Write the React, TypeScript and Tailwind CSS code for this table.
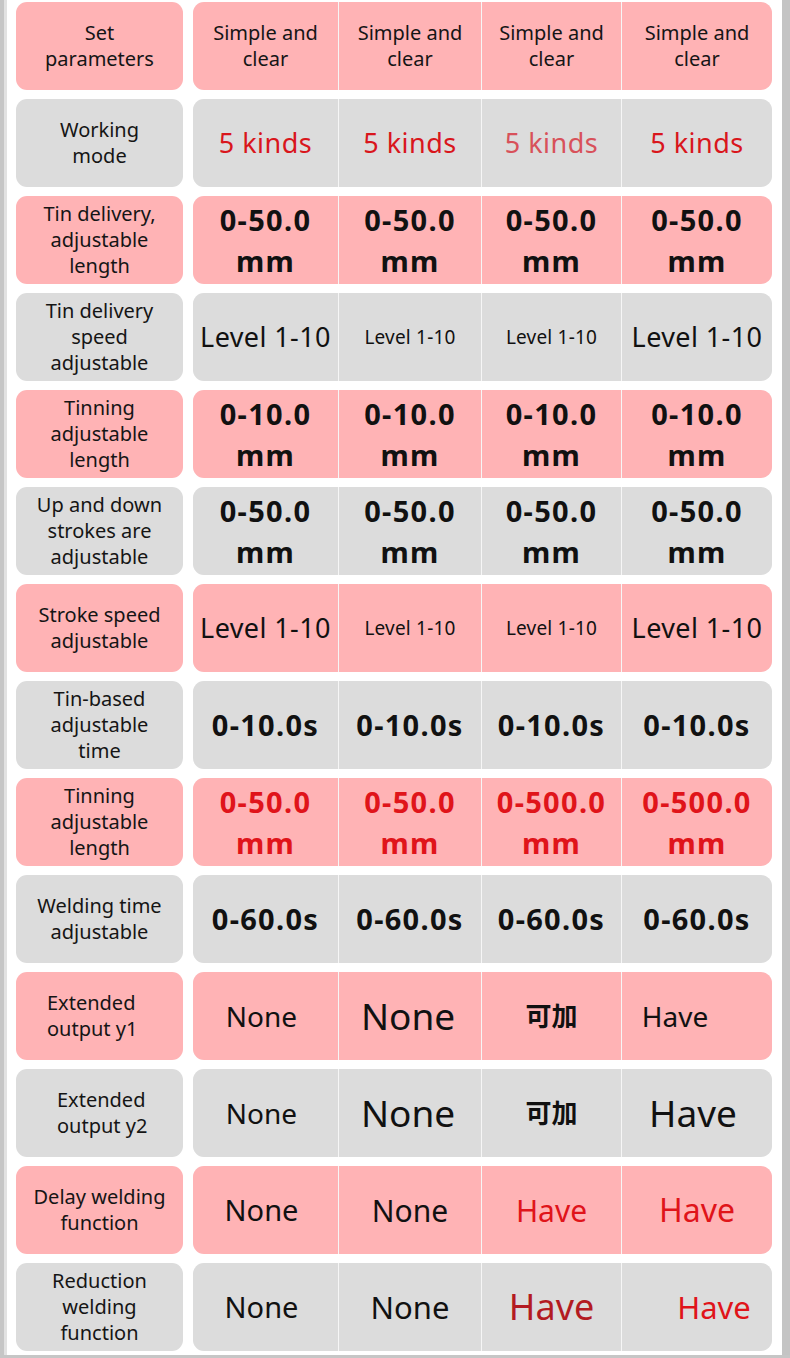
import React from "react";

type Cell = { t: string[]; c: string; wrap?: string };

const PINK = "bg-[#ffb3b5]";
const GRAY = "bg-[#dcdcdc]";

const H = "text-[20px] leading-[26px] text-[#151515]";
const KINDS = "text-[27px] tracking-[0.5px] text-[#d9161c]";
const KINDS2 = "text-[27px] tracking-[0.5px] text-[#d8515a]";
const MM = "text-[29px] font-bold leading-[41px] tracking-[1.3px] text-[#111]";
const MMR = "text-[29px] font-bold leading-[41px] tracking-[1.3px] text-[#e0141a]";
const LVL_B = "text-[27px] tracking-[0.4px] text-[#111]";
const LVL_S = "text-[19px] tracking-[0.2px] text-[#111]";
const SEC = "text-[29px] font-bold tracking-[1.3px] text-[#111]";

const rows: { pink: boolean; label: string[]; labelCls?: string; cells: Cell[] }[] = [
  {
    pink: true,
    label: ["Set", "parameters"],
    cells: [
      { t: ["Simple and", "clear"], c: H },
      { t: ["Simple and", "clear"], c: H },
      { t: ["Simple and", "clear"], c: H },
      { t: ["Simple and", "clear"], c: H },
    ],
  },
  {
    pink: false,
    label: ["Working", "mode"],
    cells: [
      { t: ["5 kinds"], c: KINDS },
      { t: ["5 kinds"], c: KINDS },
      { t: ["5 kinds"], c: KINDS2 },
      { t: ["5 kinds"], c: KINDS },
    ],
  },
  {
    pink: true,
    label: ["Tin delivery,", "adjustable", "length"],
    cells: [
      { t: ["0-50.0", "mm"], c: MM },
      { t: ["0-50.0", "mm"], c: MM },
      { t: ["0-50.0", "mm"], c: MM },
      { t: ["0-50.0", "mm"], c: MM },
    ],
  },
  {
    pink: false,
    label: ["Tin delivery", "speed", "adjustable"],
    cells: [
      { t: ["Level 1-10"], c: LVL_B },
      { t: ["Level 1-10"], c: LVL_S },
      { t: ["Level 1-10"], c: LVL_S },
      { t: ["Level 1-10"], c: LVL_B },
    ],
  },
  {
    pink: true,
    label: ["Tinning", "adjustable", "length"],
    cells: [
      { t: ["0-10.0", "mm"], c: MM },
      { t: ["0-10.0", "mm"], c: MM },
      { t: ["0-10.0", "mm"], c: MM },
      { t: ["0-10.0", "mm"], c: MM },
    ],
  },
  {
    pink: false,
    label: ["Up and down", "strokes are", "adjustable"],
    cells: [
      { t: ["0-50.0", "mm"], c: MM },
      { t: ["0-50.0", "mm"], c: MM },
      { t: ["0-50.0", "mm"], c: MM },
      { t: ["0-50.0", "mm"], c: MM },
    ],
  },
  {
    pink: true,
    label: ["Stroke speed", "adjustable"],
    cells: [
      { t: ["Level 1-10"], c: LVL_B },
      { t: ["Level 1-10"], c: LVL_S },
      { t: ["Level 1-10"], c: LVL_S },
      { t: ["Level 1-10"], c: LVL_B },
    ],
  },
  {
    pink: false,
    label: ["Tin-based", "adjustable", "time"],
    cells: [
      { t: ["0-10.0s"], c: SEC },
      { t: ["0-10.0s"], c: SEC },
      { t: ["0-10.0s"], c: SEC },
      { t: ["0-10.0s"], c: SEC },
    ],
  },
  {
    pink: true,
    label: ["Tinning", "adjustable", "length"],
    cells: [
      { t: ["0-50.0", "mm"], c: MMR },
      { t: ["0-50.0", "mm"], c: MMR },
      { t: ["0-500.0", "mm"], c: MMR },
      { t: ["0-500.0", "mm"], c: MMR },
    ],
  },
  {
    pink: false,
    label: ["Welding time", "adjustable"],
    cells: [
      { t: ["0-60.0s"], c: SEC },
      { t: ["0-60.0s"], c: SEC },
      { t: ["0-60.0s"], c: SEC },
      { t: ["0-60.0s"], c: SEC },
    ],
  },
  {
    pink: true,
    label: ["Extended", "output y1"],
    labelCls: "items-start pl-[31px]",
    cells: [
      { t: ["None"], c: "text-[28px] text-[#111]", wrap: "pr-[8px]" },
      { t: ["None"], c: "text-[37px] text-[#111]", wrap: "pr-[4px]" },
      { t: ["可加"], c: "text-[26px] font-bold text-[#111]" },
      { t: ["Have"], c: "text-[28px] text-[#111]", wrap: "pr-[44px]" },
    ],
  },
  {
    pink: false,
    label: ["Extended", "output y2"],
    labelCls: "items-start pl-[41px]",
    cells: [
      { t: ["None"], c: "text-[28px] text-[#111]", wrap: "pr-[8px]" },
      { t: ["None"], c: "text-[37px] text-[#111]", wrap: "pr-[4px]" },
      { t: ["可加"], c: "text-[26px] font-bold text-[#111]" },
      { t: ["Have"], c: "text-[37px] text-[#111]", wrap: "pr-[8px]" },
    ],
  },
  {
    pink: true,
    label: ["Delay welding", "function"],
    cells: [
      { t: ["None"], c: "text-[29px] text-[#111]", wrap: "pr-[8px]" },
      { t: ["None"], c: "text-[30px] text-[#111]" },
      { t: ["Have"], c: "text-[30px] text-[#e0141a]" },
      { t: ["Have"], c: "text-[32px] text-[#e0141a]" },
    ],
  },
  {
    pink: false,
    label: ["Reduction", "welding", "function"],
    cells: [
      { t: ["None"], c: "text-[29px] text-[#111]", wrap: "pr-[8px]" },
      { t: ["None"], c: "text-[31px] text-[#111]" },
      { t: ["Have"], c: "text-[36px] text-[#b31b22]" },
      { t: ["Have"], c: "text-[31px] text-[#e0141a]", wrap: "pl-[34px]" },
    ],
  },
];

const colW = ["w-[145px]", "w-[142px]", "w-[139px]", "w-[150px]"];

export default function App() {
  return (
    <div
      className="w-[790px] h-[1358px] bg-white flex flex-col overflow-hidden"
      style={{ fontFamily: '"Noto Sans", "Noto Sans CJK SC", sans-serif' }}
    >
      <div className="flex flex-1">
        <div className="w-[4px] bg-[#c6c6c6]" />
        <div className="w-[3px] bg-[#e2e2e2]" />
        <div className="flex-1 flex flex-col gap-[9px] pt-[2px] pl-[9px] pr-[10px]">
          {rows.map((r, i) => (
            <div key={i} className="flex gap-[10px] h-[88px]">
              <div
                className={`w-[167px] rounded-[11px] flex flex-col justify-center text-[20px] leading-[26px] text-[#151515] ${
                  r.pink ? PINK : GRAY
                } ${r.labelCls ?? "items-center"}`}
              >
                {r.label.map((l, j) => (
                  <span key={j} className="whitespace-nowrap">
                    {l}
                  </span>
                ))}
              </div>
              <div className="w-[579px] rounded-[11px] overflow-hidden flex gap-[1px] bg-[#f6f6f6]">
                {r.cells.map((c, j) => (
                  <div
                    key={j}
                    className={`${colW[j]} ${r.pink ? PINK : GRAY} flex flex-col items-center justify-center whitespace-nowrap ${c.c} ${c.wrap ?? ""}`}
                  >
                    {c.t.map((l, k) => (
                      <span key={k}>{l}</span>
                    ))}
                  </div>
                ))}
              </div>
            </div>
          ))}
        </div>
        <div className="w-[8px] bg-[#c4c4c4]" />
      </div>
      <div className="h-[3px] bg-[#c6c6c6]" />
    </div>
  );
}
